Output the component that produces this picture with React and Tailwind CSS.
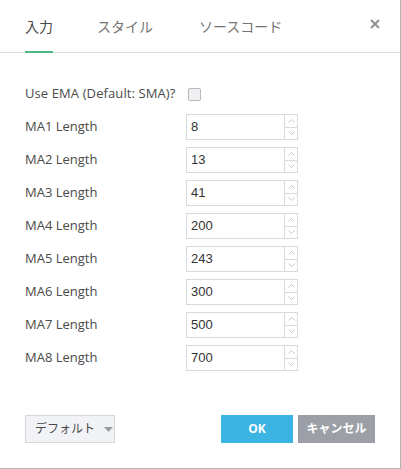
const rows = [
  ['MA1 Length', '8'],
  ['MA2 Length', '13'],
  ['MA3 Length', '41'],
  ['MA4 Length', '200'],
  ['MA5 Length', '243'],
  ['MA6 Length', '300'],
  ['MA7 Length', '500'],
  ['MA8 Length', '700'],
]

function Spinner() {
  return (
    <div className="flex flex-col w-[13px] border-l border-[#d9dadd]">
      <div className="flex-1 flex items-center justify-center border-b border-[#d9dadd]">
        <svg width="7" height="4" viewBox="0 0 7 4">
          <path d="M0.5 3.5 L3.5 0.5 L6.5 3.5" fill="none" stroke="#c3c6cc" strokeWidth="1" />
        </svg>
      </div>
      <div className="flex-1 flex items-center justify-center">
        <svg width="7" height="4" viewBox="0 0 7 4">
          <path d="M0.5 0.5 L3.5 3.5 L6.5 0.5" fill="none" stroke="#c3c6cc" strokeWidth="1" />
        </svg>
      </div>
    </div>
  )
}

function NumberField({ value }) {
  return (
    <div className="flex w-[112px] h-[26px] border border-[#d9dadd] bg-white">
      <div className="flex-1 flex items-center pl-[4px] text-[13px] text-[#333] font-['Liberation_Sans',sans-serif]">
        {value}
      </div>
      <Spinner />
    </div>
  )
}

export default function App() {
  return (
    <div className="w-[401px] h-[469px] bg-white border-r border-b border-[#b4b4b4] flex flex-col font-['Open_Sans','Noto_Sans_CJK_JP',sans-serif] text-[#4a4a4a]">
      <div className="h-[53px] border-b border-[#dcdde0] flex items-stretch pl-[25px] pr-[20px]">
        <div className="flex items-center relative text-[14px] text-[#4a4a4a]">
          入力
          <div className="absolute left-0 right-0 bottom-[-1px] h-[2px] bg-[#4db885]" />
        </div>
        <div className="flex items-center ml-[44px] text-[14px] text-[#757575]">スタイル</div>
        <div className="flex items-center ml-[46px] text-[14px] text-[#757575]">ソースコード</div>
        <div className="ml-auto flex items-center pb-[5px]">
          <svg width="10" height="10" viewBox="0 0 10 10">
            <path d="M1 1 L9 9 M9 1 L1 9" stroke="#8e8f96" strokeWidth="2" />
          </svg>
        </div>
      </div>

      <div className="pt-[28px] pl-[25px] flex flex-col gap-[7px]">
        <div className="h-[26px] flex items-center text-[13px]">
          <span className="w-[163px] tracking-[0.1px]">Use EMA (Default: SMA)?</span>
          <span className="w-[13px] h-[13px] rounded-[2px] border border-[#b9babe] bg-[#f0f0f2]" />
        </div>
        {rows.map(([label, value]) => (
          <div key={label} className="h-[26px] flex items-center text-[13px]">
            <span className="w-[161px]">{label}</span>
            <NumberField value={value} />
          </div>
        ))}
      </div>

      <div className="mt-[44px] flex items-center pl-[25px]">
        <button className="h-[28px] w-[90px] flex items-center pl-[9px] gap-[9px] whitespace-nowrap bg-[#f2f3f7] border border-[#d6d7dc] text-[12px] text-[#4a4a4a]">
          デフォルト
          <svg width="9" height="5" viewBox="0 0 9 5">
            <path d="M0 0 L9 0 L4.5 5 Z" fill="#9a9ca2" />
          </svg>
        </button>
        <button className="ml-[106px] h-[28px] w-[72px] bg-[#3bb3e3] text-white text-[12px] font-bold">
          OK
        </button>
        <button className="ml-[5px] h-[28px] w-[77px] bg-[#9d9fa6] text-white text-[12px] font-bold whitespace-nowrap">
          キャンセル
        </button>
      </div>
    </div>
  )
}
